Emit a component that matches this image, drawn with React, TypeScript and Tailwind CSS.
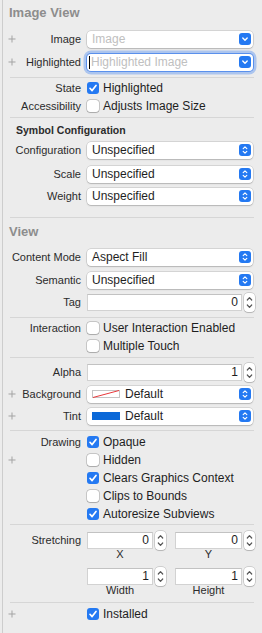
import React from "react";

function Plus() {
  return (
    <svg width="8" height="8" viewBox="0 0 8 8" className="ml-[5px] shrink-0">
      <path d="M4 0.5V7.5M0.5 4H7.5" stroke="#a3a3a3" strokeWidth="1" />
    </svg>
  );
}

function Sep({ className }: { className: string }) {
  return <div className={`ml-[7px] w-[244px] h-px bg-[#d6d6d6] ${className}`} />;
}

function Row({
  label,
  plus,
  className,
  children,
}: {
  label?: string;
  plus?: boolean;
  className: string;
  children?: React.ReactNode;
}) {
  return (
    <div className={`flex items-center ${className}`}>
      <div className="w-[78px] shrink-0 flex items-center justify-between">
        {plus ? <Plus /> : <span />}
        <span className="text-[11px] leading-none text-[#2b2b2b] whitespace-nowrap">{label}</span>
      </div>
      <div className="ml-[6px] flex items-center">{children}</div>
    </div>
  );
}

function BlueBtn({ kind }: { kind: "down" | "updown" }) {
  return (
    <div className="w-[12px] h-[12px] rounded-[3px] bg-[#2479f2] mr-[2px] shrink-0 flex items-center justify-center">
      <svg width="12" height="12" viewBox="0 0 12 12">
        {kind === "down" ? (
          <path d="M3.8 5L6 7.2L8.2 5" stroke="white" strokeWidth="1.4" fill="none" strokeLinecap="round" strokeLinejoin="round" />
        ) : (
          <>
            <path d="M4.2 4.6L6 2.9L7.8 4.6" stroke="white" strokeWidth="1.2" fill="none" strokeLinecap="round" strokeLinejoin="round" />
            <path d="M4.2 7.4L6 9.1L7.8 7.4" stroke="white" strokeWidth="1.2" fill="none" strokeLinecap="round" strokeLinejoin="round" />
          </>
        )}
      </svg>
    </div>
  );
}

function Select({
  text,
  kind = "updown",
  placeholder,
  focused,
  swatch,
}: {
  text: string;
  kind?: "down" | "updown";
  placeholder?: boolean;
  focused?: boolean;
  swatch?: "none" | "blue";
}) {
  return (
    <div
      className={`w-[166px] h-[17px] rounded-[4px] bg-white flex items-center ${
        focused
          ? "shadow-[0_0_0_1px_#5a90ec,0_0_0_3.5px_rgba(120,165,240,0.55)]"
          : "shadow-[0_0_0_0.5px_rgba(0,0,0,0.2),0_1px_1.5px_rgba(0,0,0,0.15)]"
      }`}
    >
      {focused && <div className="ml-[2px] w-px h-[13px] bg-black" />}
      {swatch === "none" && (
        <svg width="28" height="8" viewBox="0 0 28 8" className="ml-[5px] mr-[5px] shrink-0">
          <rect x="0.5" y="0.5" width="27" height="7" fill="white" stroke="#c4c4c4" />
          <path d="M1 7.5L27 0.5" stroke="#e8383b" strokeWidth="1" />
        </svg>
      )}
      {swatch === "blue" && <div className="ml-[5px] mr-[5px] w-[28px] h-[8px] bg-[#0a68d8] shrink-0" />}
      <span
        className={`flex-1 text-[12px] leading-none whitespace-nowrap ${
          swatch ? "" : focused ? "pl-[1px]" : "pl-[5px]"
        } ${placeholder ? "text-[#c0c0c0]" : "text-[#1e1e1e]"}`}
      >
        {text}
      </span>
      <BlueBtn kind={kind} />
    </div>
  );
}

function Stepper() {
  return (
    <div className="w-[11px] h-[19px] rounded-[4px] bg-white shadow-[0_0_0_0.5px_rgba(0,0,0,0.25),0_1px_1px_rgba(0,0,0,0.12)] flex items-center justify-center shrink-0">
      <svg width="11" height="19" viewBox="0 0 11 19">
        <path d="M3.3 7L5.5 4.6L7.7 7" stroke="#555" strokeWidth="1.2" fill="none" strokeLinecap="round" strokeLinejoin="round" />
        <path d="M3.3 12L5.5 14.4L7.7 12" stroke="#555" strokeWidth="1.2" fill="none" strokeLinecap="round" strokeLinejoin="round" />
      </svg>
    </div>
  );
}

function NumField({ value, w }: { value: string; w: string }) {
  return (
    <div className="flex items-center">
      <div
        className={`${w} h-[17px] bg-white border border-[#d2d2d2] border-t-[#c2c2c2] flex items-center justify-end pr-[3px] text-[12px] leading-none text-[#1e1e1e]`}
      >
        {value}
      </div>
      <div className="ml-[2px]">
        <Stepper />
      </div>
    </div>
  );
}

function Check({ checked, label }: { checked?: boolean; label: string }) {
  return (
    <div className="flex items-center">
      {checked ? (
        <div className="w-[12px] h-[12px] rounded-[3px] bg-[#2479f2] flex items-center justify-center shrink-0">
          <svg width="12" height="12" viewBox="0 0 12 12">
            <path d="M3 6.3L5.1 8.6L9 3.4" stroke="white" strokeWidth="1.7" fill="none" strokeLinecap="round" strokeLinejoin="round" />
          </svg>
        </div>
      ) : (
        <div className="w-[12px] h-[12px] rounded-[3px] bg-white shadow-[0_0_0_0.5px_rgba(0,0,0,0.3),0_0.5px_1px_rgba(0,0,0,0.15)] shrink-0" />
      )}
      <span className="ml-[4px] text-[12px] leading-none text-[#1e1e1e] whitespace-nowrap">{label}</span>
    </div>
  );
}

export default function App() {
  return (
    <div className="w-[262px] h-[633px] bg-[#ececec] pl-[2px] flex font-['Liberation_Sans',Arial,sans-serif] overflow-hidden">
      <div className="flex-1 border-l border-[#cdcdcd] flex flex-col">
        {/* Image View */}
        <div className="h-[24px] flex items-center ml-[6px] text-[13px] font-bold text-[#8d8d8d] leading-none">Image View</div>
        <Row label="Image" plus className="mt-[4px] h-[22px]">
          <Select text="Image" kind="down" placeholder />
        </Row>
        <Row label="Highlighted" plus className="mt-[1px] h-[22px]">
          <Select text="Highlighted Image" kind="down" placeholder focused />
        </Row>
        <Sep className="mt-[4px]" />
        <Row label="State" className="mt-[1px] h-[18px]">
          <Check checked label="Highlighted" />
        </Row>
        <Row label="Accessibility" className="h-[18px]">
          <Check label="Adjusts Image Size" />
        </Row>
        <Sep className="mt-[2px]" />
        <div className="mt-[3px] h-[18px] flex items-center ml-[13px] text-[10.5px] font-bold text-[#2b2b2b] leading-none">
          Symbol Configuration
        </div>
        <Row label="Configuration" className="mt-[1px] h-[20px]">
          <Select text="Unspecified" />
        </Row>
        <Row label="Scale" className="mt-[4px] h-[20px]">
          <Select text="Unspecified" />
        </Row>
        <Row label="Weight" className="mt-[2px] h-[20px]">
          <Select text="Unspecified" />
        </Row>
        <Sep className="mt-[11px]" />

        {/* View */}
        <div className="mt-[4px] h-[18px] flex items-center ml-[6px] text-[13px] font-bold text-[#8d8d8d] leading-none">View</div>
        <Row label="Content Mode" className="mt-[7px] h-[20px]">
          <Select text="Aspect Fill" />
        </Row>
        <Row label="Semantic" className="mt-[3px] h-[20px]">
          <Select text="Unspecified" />
        </Row>
        <Row label="Tag" className="mt-[2px] h-[20px]">
          <NumField value="0" w="w-[155px]" />
        </Row>
        <Sep className="mt-[5px]" />
        <Row label="Interaction" className="mt-[1px] h-[18px]">
          <Check label="User Interaction Enabled" />
        </Row>
        <Row className="h-[18px]">
          <Check label="Multiple Touch" />
        </Row>
        <Sep className="mt-[2px]" />
        <Row label="Alpha" className="mt-[4px] h-[20px]">
          <NumField value="1" w="w-[155px]" />
        </Row>
        <Row label="Background" plus className="mt-[2px] h-[20px]">
          <Select text="Default" swatch="none" />
        </Row>
        <Row label="Tint" plus className="mt-[2px] h-[20px]">
          <Select text="Default" swatch="blue" />
        </Row>
        <Sep className="mt-[4px]" />
        <Row label="Drawing" className="mt-[2px] h-[18px]">
          <Check checked label="Opaque" />
        </Row>
        <Row plus className="h-[18px]">
          <Check label="Hidden" />
        </Row>
        <Row className="h-[18px]">
          <Check checked label="Clears Graphics Context" />
        </Row>
        <Row className="h-[18px]">
          <Check label="Clips to Bounds" />
        </Row>
        <Row className="h-[18px]">
          <Check checked label="Autoresize Subviews" />
        </Row>
        <Sep className="mt-[1px]" />

        {/* Stretching */}
        <Row label="Stretching" className="mt-[6px] h-[18px]">
          <NumField value="0" w="w-[66px]" />
          <div className="ml-[9px]">
            <NumField value="0" w="w-[67px]" />
          </div>
        </Row>
        <div className="ml-[84px] h-[10px] flex items-center text-[11px] leading-none text-[#2b2b2b]">
          <div className="w-[66px] text-center">X</div>
          <div className="ml-[22px] w-[67px] text-center">Y</div>
        </div>
        <Row className="mt-[8px] h-[18px]">
          <NumField value="1" w="w-[66px]" />
          <div className="ml-[9px]">
            <NumField value="1" w="w-[67px]" />
          </div>
        </Row>
        <div className="ml-[84px] h-[10px] flex items-center text-[11px] leading-none text-[#2b2b2b]">
          <div className="w-[66px] text-center">Width</div>
          <div className="ml-[22px] w-[67px] text-center">Height</div>
        </div>
        <Sep className="mt-[7px]" />
        <Row plus className="mt-[2px] h-[18px]">
          <Check checked label="Installed" />
        </Row>
      </div>
    </div>
  );
}
